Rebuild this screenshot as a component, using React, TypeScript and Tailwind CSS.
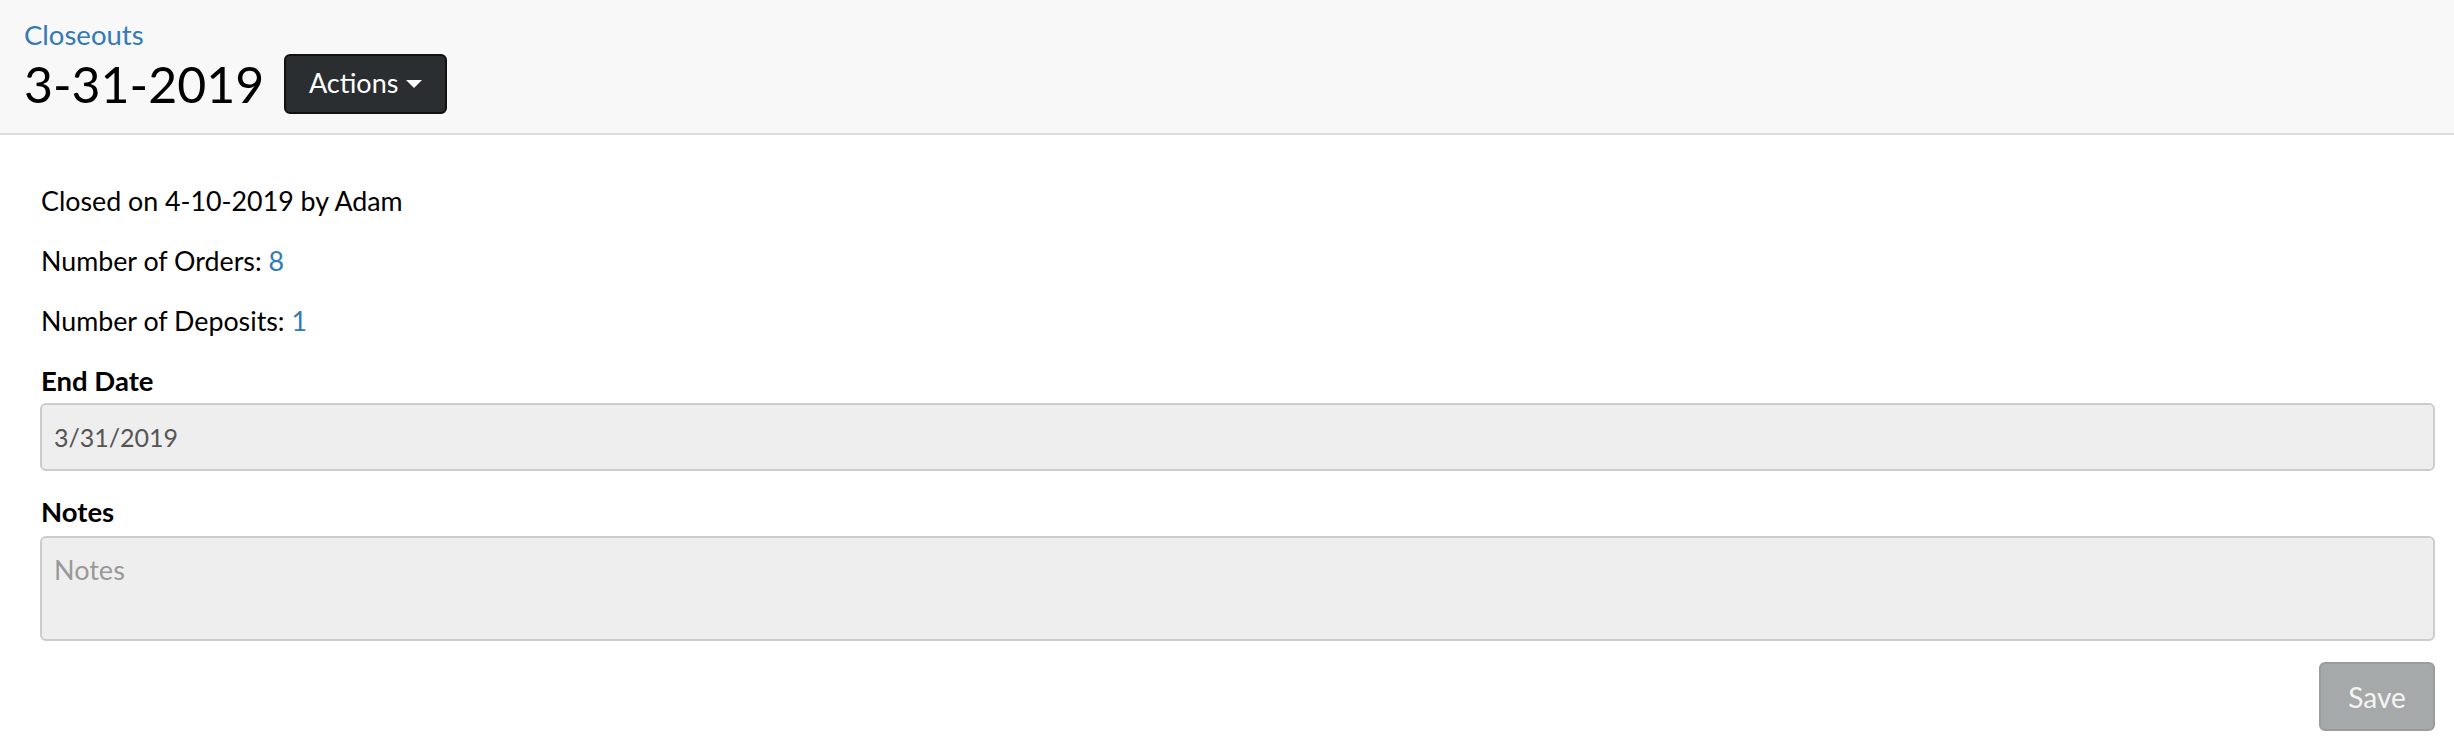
import React from "react";

export default function App() {
  const font = { fontFamily: "Lato, 'Noto Sans', sans-serif" };
  return (
    <div className="min-h-screen bg-white text-black" style={font}>
      <div className="h-[135px] bg-[#f8f8f8] border-b-2 border-[#dddddd] pl-[24px] pt-[21px] box-border">
        <a className="block text-[27.5px] leading-none text-[#337ab7]">Closeouts</a>
        <div className="flex items-center mt-[5px]">
          <h1 className="text-[50px] leading-none font-normal">3-31-2019</h1>
          <button className="ml-[20px] w-[163px] h-[60px] rounded-[6px] bg-[#2b2e31] border-2 border-[#111] text-white text-[27px] flex items-center justify-center gap-[8px]">
            <span>Actions</span>
            <svg width="16" height="8" viewBox="0 0 16 8"><path d="M0 0 L16 0 L8 8 Z" fill="white" /></svg>
          </button>
        </div>
      </div>
      <div className="pl-[40px] pr-[19px] pt-[47px] text-[26.8px] leading-[38px]">
        <p className="mb-[22px] pl-[1px]">Closed on 4-10-2019 by Adam</p>
        <p className="mb-[22px] pl-[1px]">Number of Orders: <a className="text-[#337ab7]">8</a></p>
        <p className="mb-[22px] pl-[1px]">Number of Deposits: <a className="text-[#337ab7]">1</a></p>
        <label className="block font-bold text-[27.5px] mb-[3px] pl-[1px]">End Date</label>
        <div className="h-[68px] bg-[#eeeeee] border-2 border-[#cccccc] rounded-[6px] flex items-center px-[12px] text-[25px] text-[#555555] mb-[22px]">3/31/2019</div>
        <label className="block font-bold text-[27.5px] mb-[5px] pl-[1px]">Notes</label>
        <div className="h-[105px] bg-[#eeeeee] border-2 border-[#cccccc] rounded-[6px] px-[12px] pt-[13px] text-[27px] text-[#999999] box-border">Notes</div>
        <div className="flex justify-end mt-[21px]">
          <button className="w-[116px] h-[69px] rounded-[6px] bg-[#a6a9a9] border-2 border-[#9a9d9d] text-[#f4f4f4] text-[28px]">Save</button>
        </div>
      </div>
    </div>
  );
}
